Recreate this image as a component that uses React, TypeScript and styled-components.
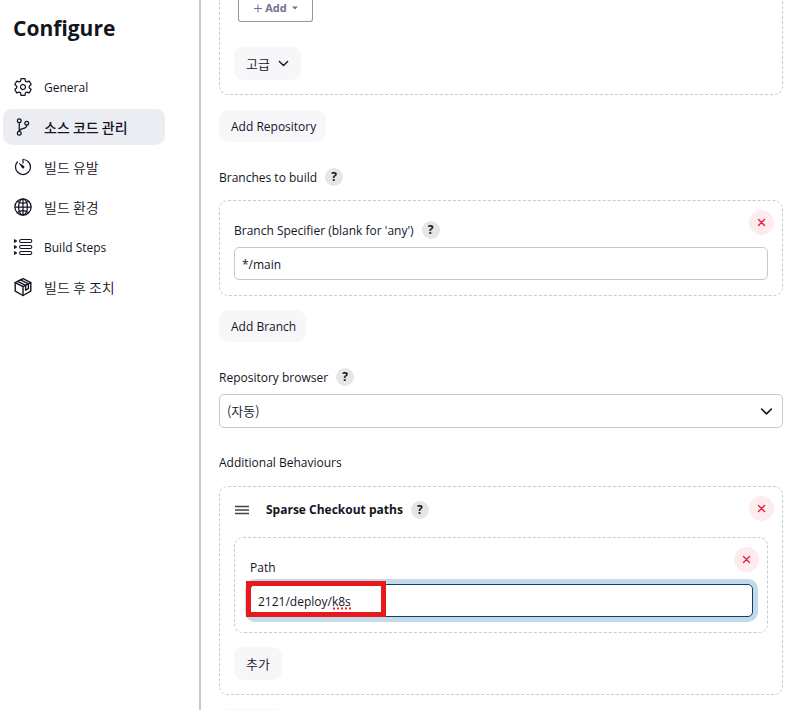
import React from "react";
import styled, { createGlobalStyle, css } from "styled-components";
import {
  IoSettingsOutline,
  IoGitBranchOutline,
  IoTimerOutline,
  IoGlobeOutline,
} from "react-icons/io5";

const GlobalStyle = createGlobalStyle`
  *, *::before, *::after { box-sizing: border-box; }
  body {
    margin: 0;
    background: #fff;
    color: #14141f;
    font-family: "Open Sans", "Noto Sans CJK KR", sans-serif;
    font-size: 12px;
    line-height: 18px;
  }
  button, input, select { font: inherit; color: inherit; }
`;

const Page = styled.div`
  display: flex;
  height: 100vh;
  overflow: hidden;
`;

const Sidebar = styled.aside`
  flex: 0 0 199px;
  padding: 12px 34px 0 3px;
`;

const Title = styled.h1`
  margin: 0 0 25px 10px;
  font-size: 21px;
  line-height: 32px;
  font-weight: 700;
`;

const Nav = styled.nav`
  display: flex;
  flex-direction: column;
  gap: 4px;
`;

const NavLink = styled.a<{ $active?: boolean; $korean?: boolean }>`
  display: flex;
  align-items: center;
  gap: 11px;
  height: 36px;
  padding-left: 10px;
  border-radius: 9px;
  color: inherit;
  text-decoration: none;
  font-size: ${(p) => (p.$korean ? 14 : 12)}px;
  font-weight: ${(p) => (p.$active ? 500 : p.$korean ? 350 : 400)};
  font-family: ${(p) => (p.$korean ? '"Noto Sans CJK KR"' : '"Open Sans"')}, sans-serif;
  background: ${(p) => (p.$active ? "#ecedf3" : "transparent")};
  svg {
    width: 20px;
    height: 20px;
    flex: none;
  }
  span {
    padding-top: ${(p) => (p.$korean ? 0 : 2)}px;
  }
`;

const Main = styled.main`
  flex: 1;
  min-width: 0;
  padding: 0 23px 0 18px;
  border-left: 2px solid #c0cbd0;
`;

const panelBase = css`
  position: relative;
  border: 1px dashed #c3ccd1;
  border-radius: 9px;
`;

const ClippedPanel = styled.section`
  ${panelBase}
  border-top: 0;
  border-top-left-radius: 0;
  border-top-right-radius: 0;
  padding: 0 14px 14px;
  margin-bottom: 15px;
`;

const Panel = styled.section<{ $spaced?: boolean }>`
  ${panelBase}
  padding: 20px 14px 15px;
  margin-bottom: ${(p) => (p.$spaced ? 14 : 0)}px;
`;

const BehaviourPanel = styled(Panel)`
  padding: 14px;
`;

const PathPanel = styled(Panel)`
  padding-left: 15px;
`;

const AddButton = styled.button`
  display: flex;
  align-items: center;
  justify-content: center;
  gap: 2px;
  width: 75px;
  height: 22px;
  margin: 0 0 25px 4px;
  padding: 0 0 6px;
  border: 1px solid #8a9ba8;
  border-top: 0;
  border-radius: 0 0 3px 3px;
  background: #fff;
  color: #73738c;
  font-size: 11px;
  font-weight: 700;
`;

const Caret = styled.svg`
  margin-left: 3px;
`;

const Button = styled.button<{ $korean?: boolean }>`
  display: flex;
  align-items: center;
  gap: 8px;
  height: ${(p) => (p.$korean ? 33 : 32)}px;
  padding: ${(p) => (p.$korean ? "0 12px" : "2px 10px 0 12px")};
  border: 0;
  border-radius: 9px;
  background: #f7f7fa;
  font-family: ${(p) => (p.$korean ? '"Noto Sans CJK KR"' : '"Open Sans"')}, sans-serif;
  font-size: ${(p) => (p.$korean ? 13 : 12)}px;
  font-weight: ${(p) => (p.$korean ? 350 : 400)};
`;

const LabelRow = styled.div<{ $top?: number; $bottom?: number }>`
  display: flex;
  align-items: center;
  gap: 8px;
  height: 18px;
  margin-top: ${(p) => p.$top ?? 0}px;
  margin-bottom: ${(p) => p.$bottom ?? 0}px;
  & > span, & > label { padding-top: 2px; }
`;

const HelpButton = styled.button`
  width: 18px;
  height: 18px;
  padding: 0;
  border: 0;
  border-radius: 50%;
  background: #e6e6e6;
  font-size: 12px;
  line-height: 18px;
  font-weight: 700;
`;

const DeleteButton = styled.button`
  position: absolute;
  top: 9px;
  right: 8px;
  display: grid;
  place-items: center;
  width: 25px;
  height: 25px;
  padding: 0;
  border: 0;
  border-radius: 50%;
  background: #fdebee;
  color: #e6183b;
`;

const TextInput = styled.input`
  display: block;
  width: 100%;
  height: 33px;
  padding: 2px 7px 0;
  border: 1px solid #c0cbd0;
  border-radius: 5px;
  background: #fff;
  outline: none;
`;

const FocusedInput = styled(TextInput)`
  border-color: #0b4268;
  box-shadow: 0 0 0 5px #c3dae8;
`;

const SelectWrap = styled.div`
  display: grid;
  align-items: center;
  & > * { grid-area: 1 / 1; }
  svg {
    justify-self: end;
    margin-right: 10px;
    pointer-events: none;
  }
`;

const Select = styled.select`
  appearance: none;
  width: 100%;
  height: 34px;
  padding: 0 7px;
  border: 1px solid #c0cbd0;
  border-radius: 5px;
  background: #fff;
  font-family: "Noto Sans CJK KR", sans-serif;
  font-size: 13px;
  font-weight: 350;
  outline: none;
`;

const Heading = styled.div`
  display: flex;
  align-items: center;
  gap: 8px;
  height: 18px;
  margin-bottom: 18px;
  font-weight: 700;
`;

const DragHandle = styled.svg`
  margin: 0 9px 0 1px;
`;

const InputHolder = styled.div`
  position: relative;
`;

const Highlight = styled.div`
  position: absolute;
  top: -3px;
  left: -4px;
  width: 140px;
  height: 36px;
  border: 5px solid #e8191c;
  pointer-events: none;
`;

const SpellMark = styled.svg`
  position: absolute;
  left: 83px;
  top: 23px;
  pointer-events: none;
`;

const NextButton = styled(Button)`
  width: 64px;
  margin-top: 14px;
`;

const StepsIcon = () => (
  <svg viewBox="0 0 20 20" fill="none" stroke="currentColor" strokeWidth="1.1">
    {[4, 10, 16].map((y) => (
      <g key={y}>
        <path d={`M1.5 ${y - 1.3}L3.5 ${y}L1.5 ${y + 1.3}Z`} strokeLinejoin="round" />
        <rect x="6.6" y={y - 1.5} width="12.2" height="3" rx="1.5" />
      </g>
    ))}
  </svg>
);

const PackageIcon = () => (
  <svg
    viewBox="0 0 20 20"
    fill="none"
    stroke="currentColor"
    strokeWidth="1.4"
    strokeLinejoin="round"
    strokeLinecap="round"
  >
    <path d="M10 1.6L17.8 5.6V14.2L10 18.5L2.2 14.2V5.6Z" />
    <path d="M2.2 5.6L10 9.6L17.8 5.6M10 9.6V18.5" />
    <path d="M4.6 4.4L12.6 8.4V13.2L15.4 11.7V6.9L7.4 2.9" />
  </svg>
);

const Chevron = ({ size = 11 }: { size?: number }) => (
  <svg width={size} height={size} viewBox="0 0 12 12" fill="none" stroke="currentColor" strokeWidth="1.5" strokeLinecap="round" strokeLinejoin="round">
    <path d="M1.5 3.7L6 8.2L10.5 3.7" />
  </svg>
);

const Help = ({ topic }: { topic: string }) => (
  <HelpButton type="button" aria-label={`Help for ${topic}`}>?</HelpButton>
);

const Delete = () => (
  <DeleteButton type="button" aria-label="Delete">
    <svg width="9" height="9" viewBox="0 0 9 9" fill="none" stroke="currentColor" strokeWidth="1.3" strokeLinecap="round">
      <path d="M1.5 1.5L7.5 7.5M7.5 1.5L1.5 7.5" />
    </svg>
  </DeleteButton>
);

const navItems = [
  { label: "General", icon: <IoSettingsOutline /> },
  { label: "소스 코드 관리", icon: <IoGitBranchOutline />, korean: true, active: true },
  { label: "빌드 유발", icon: <IoTimerOutline />, korean: true },
  { label: "빌드 환경", icon: <IoGlobeOutline />, korean: true },
  { label: "Build Steps", icon: <StepsIcon /> },
  { label: "빌드 후 조치", icon: <PackageIcon />, korean: true },
];

export default function App() {
  return (
    <Page>
      <GlobalStyle />
      <Sidebar>
        <Title>Configure</Title>
        <Nav>
          {navItems.map((item) => (
            <NavLink
              key={item.label}
              href="#"
              $active={item.active}
              $korean={item.korean}
              aria-current={item.active ? "true" : undefined}
            >
              {item.icon}
              <span>{item.label}</span>
            </NavLink>
          ))}
        </Nav>
      </Sidebar>
      <Main>
        <ClippedPanel>
          <AddButton type="button">
            <svg width="10" height="10" viewBox="0 0 10 10" stroke="currentColor" strokeWidth="1">
              <path d="M1 5.5H9M5 1.5V9.5" />
            </svg>
            Add
            <Caret width="6" height="4" viewBox="0 0 6 4" fill="currentColor">
              <path d="M0 0.5H6L3 3.5Z" />
            </Caret>
          </AddButton>
          <Button type="button" $korean>
            고급
            <Chevron />
          </Button>
        </ClippedPanel>
        <Button type="button">Add Repository</Button>

        <LabelRow $top={26} $bottom={14}>
          <span>Branches to build</span>
          <Help topic="Branches to build" />
        </LabelRow>
        <Panel $spaced>
          <LabelRow $bottom={8}>
            <label htmlFor="branch">Branch Specifier (blank for 'any')</label>
            <Help topic="Branch Specifier" />
          </LabelRow>
          <Delete />
          <TextInput id="branch" defaultValue="*/main" />
        </Panel>
        <Button type="button">Add Branch</Button>

        <LabelRow $top={26} $bottom={8}>
          <label htmlFor="browser">Repository browser</label>
          <Help topic="Repository browser" />
        </LabelRow>
        <SelectWrap>
          <Select id="browser">
            <option>(자동)</option>
          </Select>
          <Chevron size={13} />
        </SelectWrap>

        <LabelRow $top={25} $bottom={15}>
          <span>Additional Behaviours</span>
        </LabelRow>
        <BehaviourPanel>
          <Heading>
            <DragHandle width="14" height="10" viewBox="0 0 14 10" stroke="#43434f" strokeWidth="1.5">
              <path d="M0 1.5H14M0 5H14M0 8.5H14" />
            </DragHandle>
            Sparse Checkout paths
            <Help topic="Sparse Checkout paths" />
          </Heading>
          <Delete />
          <PathPanel $spaced>
            <LabelRow $bottom={8}>
              <label htmlFor="path">Path</label>
            </LabelRow>
            <Delete />
            <InputHolder>
              <FocusedInput id="path" defaultValue="2121/deploy/k8s" spellCheck={false} />
              <SpellMark width="19" height="3" viewBox="0 0 19 3" fill="none" stroke="#ff2020" strokeWidth="2" strokeDasharray="2 2">
                <path d="M0 1.5H19" />
              </SpellMark>
              <Highlight />
            </InputHolder>
          </PathPanel>
          <Button type="button" $korean>추가</Button>
        </BehaviourPanel>
        <NextButton type="button" aria-label="추가" />
      </Main>
    </Page>
  );
}
